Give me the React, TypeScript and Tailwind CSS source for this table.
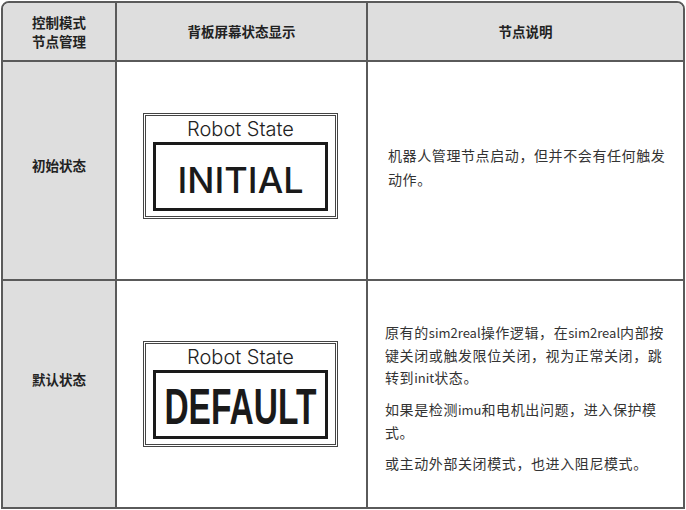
import React from 'react';

const CJK = "font-['Noto_Sans_CJK_SC','Noto_Sans',sans-serif]";

const StateScreen: React.FC<{ label: string; big: string; bigClass: string }> = ({ label, big, bigClass }) => (
  <div className="w-[195px] h-[106px] border-[3px] border-double border-[#444] bg-white flex flex-col items-center px-[7px] pb-[5px]">
    <div className="text-[20px] leading-[25px] pt-[1px] font-light text-[#222] font-['Inter',sans-serif]">{label}</div>
    <div className="flex-1 w-full border-[3px] border-[#1a1a1a] flex items-center justify-center overflow-hidden">
      <span className={bigClass}>{big}</span>
    </div>
  </div>
);

const Latin: React.FC<{ children: React.ReactNode }> = ({ children }) => (
  <span className="tracking-normal text-[13px]">{children}</span>
);

export default function App() {
  return (
    <div className={`w-[686px] h-[510px] bg-white pt-px pl-px ${CJK}`}>
      <div className="w-[684px] h-[508px] border-2 border-[#5a5a5a] rounded-t-[8px] overflow-hidden grid grid-cols-[114px_251px_1fr] grid-rows-[59px_219px_1fr]">
        {/* header */}
        <div className="bg-[#dedede] border-r-2 border-b-2 border-[#5a5a5a] flex flex-col items-center justify-center text-center text-[13.5px] leading-[19px] font-bold text-[#222]">
          <span>控制模式</span>
          <span>节点管理</span>
        </div>
        <div className="bg-[#dedede] border-r-2 border-b-2 border-[#5a5a5a] flex items-center justify-center text-[13.5px] font-bold text-[#222]">
          背板屏幕状态显示
        </div>
        <div className="bg-[#dedede] border-b-2 border-[#5a5a5a] flex items-center justify-center text-[13.5px] font-bold text-[#222]">
          节点说明
        </div>

        {/* row 1 */}
        <div className="bg-[#dedede] border-r-2 border-b-2 border-[#5a5a5a] flex items-center justify-center pb-[10px] text-[13.5px] font-bold text-[#222]">
          初始状态
        </div>
        <div className="border-r-2 border-b-2 border-[#5a5a5a] flex items-center pl-[26px] pb-[9px]">
          <StateScreen
            label="Robot State"
            big="INITIAL"
            bigClass="text-[36px] leading-none font-medium text-[#1a1a1a] font-['Inter',sans-serif] pt-[6px]"
          />
        </div>
        <div className="border-b-2 border-[#5a5a5a] flex flex-col justify-center pl-[20px] pb-[8px] text-[14px] leading-[24px] tracking-[0.6px] text-[#333]">
          <p className="whitespace-nowrap">机器人管理节点启动，但并不会有任何触发</p>
          <p className="whitespace-nowrap">动作。</p>
        </div>

        {/* row 2 */}
        <div className="bg-[#dedede] border-r-2 border-[#5a5a5a] flex items-center justify-center pb-[30px] text-[13.5px] font-bold text-[#222]">
          默认状态
        </div>
        <div className="border-r-2 border-[#5a5a5a] flex items-center pl-[26px]">
          <StateScreen
            label="Robot State"
            big="DEFAULT"
            bigClass="text-[50px] leading-none font-bold text-[#1a1a1a] font-['Liberation_Sans',sans-serif] scale-x-[0.67] pt-[4px]"
          />
        </div>
        <div className="flex flex-col justify-start pl-[17px] pt-[40px] text-[14px] leading-[22px] tracking-[0.6px] text-[#333]">
          <p className="whitespace-nowrap">
            原有的<Latin>sim2real</Latin>操作逻辑，在<Latin>sim2real</Latin>内部按
          </p>
          <p className="whitespace-nowrap">键关闭或触发限位关闭，视为正常关闭，跳</p>
          <p className="whitespace-nowrap">
            转到<Latin>init</Latin>状态。
          </p>
          <p className="whitespace-nowrap mt-[9px]">
            如果是检测<Latin>imu</Latin>和电机出问题，进入保护模
          </p>
          <p className="whitespace-nowrap">式。</p>
          <p className="whitespace-nowrap mt-[9px]">或主动外部关闭模式，也进入阻尼模式。</p>
        </div>
      </div>
    </div>
  );
}
